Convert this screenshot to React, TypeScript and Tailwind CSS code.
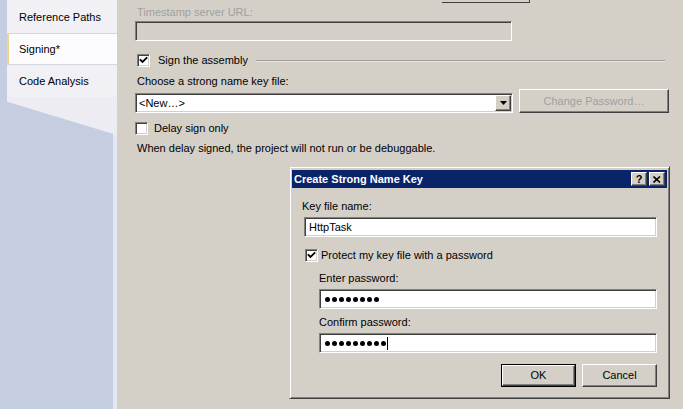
import React from "react";

const font = "font-['Tahoma','Liberation_Sans',Arial,sans-serif] text-[11px] leading-[13px]";

// Win2000 style bevels
const sunken =
  "border border-t-[#808080] border-l-[#808080] border-b-white border-r-white shadow-[inset_1px_1px_0_#404040,inset_-1px_-1px_0_#d4d0c8]";
const raised =
  "border border-t-white border-l-white border-b-[#404040] border-r-[#404040] shadow-[inset_-1px_-1px_0_#808080]";

function Check({ checked, white }: { checked?: boolean; white?: boolean }) {
  return (
    <div className={`w-[13px] h-[13px] shrink-0 ${sunken} ${white ? "bg-white" : "bg-white"} flex items-center justify-center`}>
      {checked && (
        <svg width="9" height="9" viewBox="0 0 9 9">
          <path d="M1.5 4 L3.5 6 L7.5 2" stroke="#000" strokeWidth="1.8" fill="none" strokeLinecap="square" />
        </svg>
      )}
    </div>
  );
}

function Dots({ n, caret }: { n: number; caret?: boolean }) {
  return (
    <div className="flex items-center gap-[2px] h-full pl-[5px]">
      {Array.from({ length: n }).map((_, i) => (
        <div key={i} className="w-[5px] h-[5px] rounded-full bg-black" />
      ))}
      {caret && <div className="w-px h-[13px] bg-black -ml-[1px]" />}
    </div>
  );
}

function Sidebar() {
  const tab = "relative pl-[12px] text-black";
  return (
    <div className="w-[117px] shrink-0 h-full bg-[#c4cee0] flex flex-col relative">
      <div className="absolute right-0 top-0 bottom-0 w-[4px] bg-[#e3e7f2]" />
      <div className="relative ml-[7px] w-[110px] flex flex-col">
        <div className={`${tab} h-[34px] pt-[11px] bg-[#f0f0f5] border-b border-[#d6d6e0]`}>Reference Paths</div>
        <div className={`${tab} h-[31px] pt-[9px] bg-[#fcfcfe] border-b border-[#d6d6e0]`}>
          <div className="absolute left-0 top-0 bottom-0 w-[2px] bg-[#f2d48e]" />
          Signing*
        </div>
        <div className={`${tab} h-[32px] pt-[10px] bg-[#f0f0f5]`}>Code Analysis</div>
        <div className="h-[40px] bg-[#ececf2] [clip-path:polygon(0_0,100%_0,100%_100%,96%_92%,0_12%)]" />
      </div>
    </div>
  );
}

function Dialog() {
  return (
    <div
      className={`absolute left-[289px] top-[166px] w-[381px] h-[233px] bg-[#d4d0c8] p-[2px] pt-[3px] border border-t-[#d4d0c8] border-l-[#d4d0c8] border-b-[#404040] border-r-[#404040] shadow-[inset_1px_1px_0_white,inset_-1px_-1px_0_#808080]`}
    >
      <div className="h-[18px] bg-[#0a246a] flex items-center pl-[2px] pr-[2px]">
        <span className="font-bold text-white text-[11px] leading-[13px] flex-1">Create Strong Name Key</span>
        <div className={`w-[16px] h-[14px] bg-[#d4d0c8] ${raised} flex items-center justify-center font-bold text-[11px] leading-none text-black`}>?</div>
        <div className={`ml-[2px] w-[16px] h-[14px] bg-[#d4d0c8] ${raised} flex items-center justify-center`}>
          <svg width="8" height="7" viewBox="0 0 8 7">
            <path d="M0.5 0.5 L7 6.5 M7 0.5 L0.5 6.5" stroke="#000" strokeWidth="1.6" />
          </svg>
        </div>
      </div>
      <div className="flex flex-col pl-[10px] pr-[10px]">
        <div className="mt-[12px]">Key file name:</div>
        <div className={`mt-[4px] ml-[2px] h-[20px] bg-white ${sunken} flex items-center pl-[4px]`}>HttpTask</div>
        <div className="mt-[12px] ml-[3px] flex items-center gap-[3px]">
          <Check checked />
          <span>Protect my key file with a password</span>
        </div>
        <div className="ml-[17px] flex flex-col">
          <div className="mt-[10px]">Enter password:</div>
          <div className={`mt-[4px] h-[20px] bg-white ${sunken}`}>
            <Dots n={8} />
          </div>
          <div className="mt-[7px]">Confirm password:</div>
          <div className={`mt-[4px] h-[20px] bg-white ${sunken}`}>
            <Dots n={9} caret />
          </div>
        </div>
        <div className="mt-[11px] flex justify-end gap-[6px]">
          <div className="w-[75px] h-[23px] border border-black">
            <div className={`w-full h-full ${raised} flex items-center justify-center`}>OK</div>
          </div>
          <div className={`w-[75px] h-[23px] ${raised} flex items-center justify-center`}>Cancel</div>
        </div>
      </div>
    </div>
  );
}

export default function App() {
  return (
    <div className={`w-[683px] h-[409px] overflow-hidden flex bg-[#d4d0c8] relative ${font} text-black`}>
      <Sidebar />
      <div className="flex-1 flex flex-col pl-[18px]">
        <div className="h-[3px] flex">
          <div className="ml-[307px] w-[88px] h-[3px] border-b border-r border-b-[#404040] border-r-[#404040]" />
        </div>
        <div className="mt-[3px] pl-[2px] text-[#a0a0a0]">Timestamp server URL:</div>
        <div className={`mt-[2px] w-[377px] h-[20px] bg-[#d4d0c8] ${sunken}`} />
        <div className="mt-[13px] pl-[2px] flex items-center">
          <Check checked />
          <span className="ml-[8px]">Sign the assembly</span>
          <div className="ml-[8px] flex-1 mr-[18px] flex flex-col">
            <div className="h-px bg-[#9c9c9c]" />
            <div className="h-px bg-[#ece9e2]" />
          </div>
        </div>
        <div className="mt-[8px] pl-[2px]">Choose a strong name key file:</div>
        <div className="mt-[1px] flex items-start">
          <div className={`mt-[4px] w-[378px] h-[20px] bg-white ${sunken} flex items-center justify-between pl-[3px] pr-[1px]`}>
            <span>&lt;New…&gt;</span>
            <div className={`w-[16px] h-[16px] bg-[#d4d0c8] ${raised} flex items-center justify-center`}>
              <svg width="7" height="4" viewBox="0 0 7 4">
                <path d="M0 0 H7 L3.5 4 Z" fill="#000" />
              </svg>
            </div>
          </div>
          <div className={`ml-[6px] w-[150px] h-[24px] ${raised} flex items-center justify-center text-[#a0a0a0]`}>
            Change Password…
          </div>
        </div>
        <div className="mt-[9px] flex items-center">
          <Check />
          <span className="ml-[6px]">Delay sign only</span>
        </div>
        <div className="mt-[7px] pl-[2px]">When delay signed, the project will not run or be debuggable.</div>
      </div>
      <Dialog />
    </div>
  );
}
